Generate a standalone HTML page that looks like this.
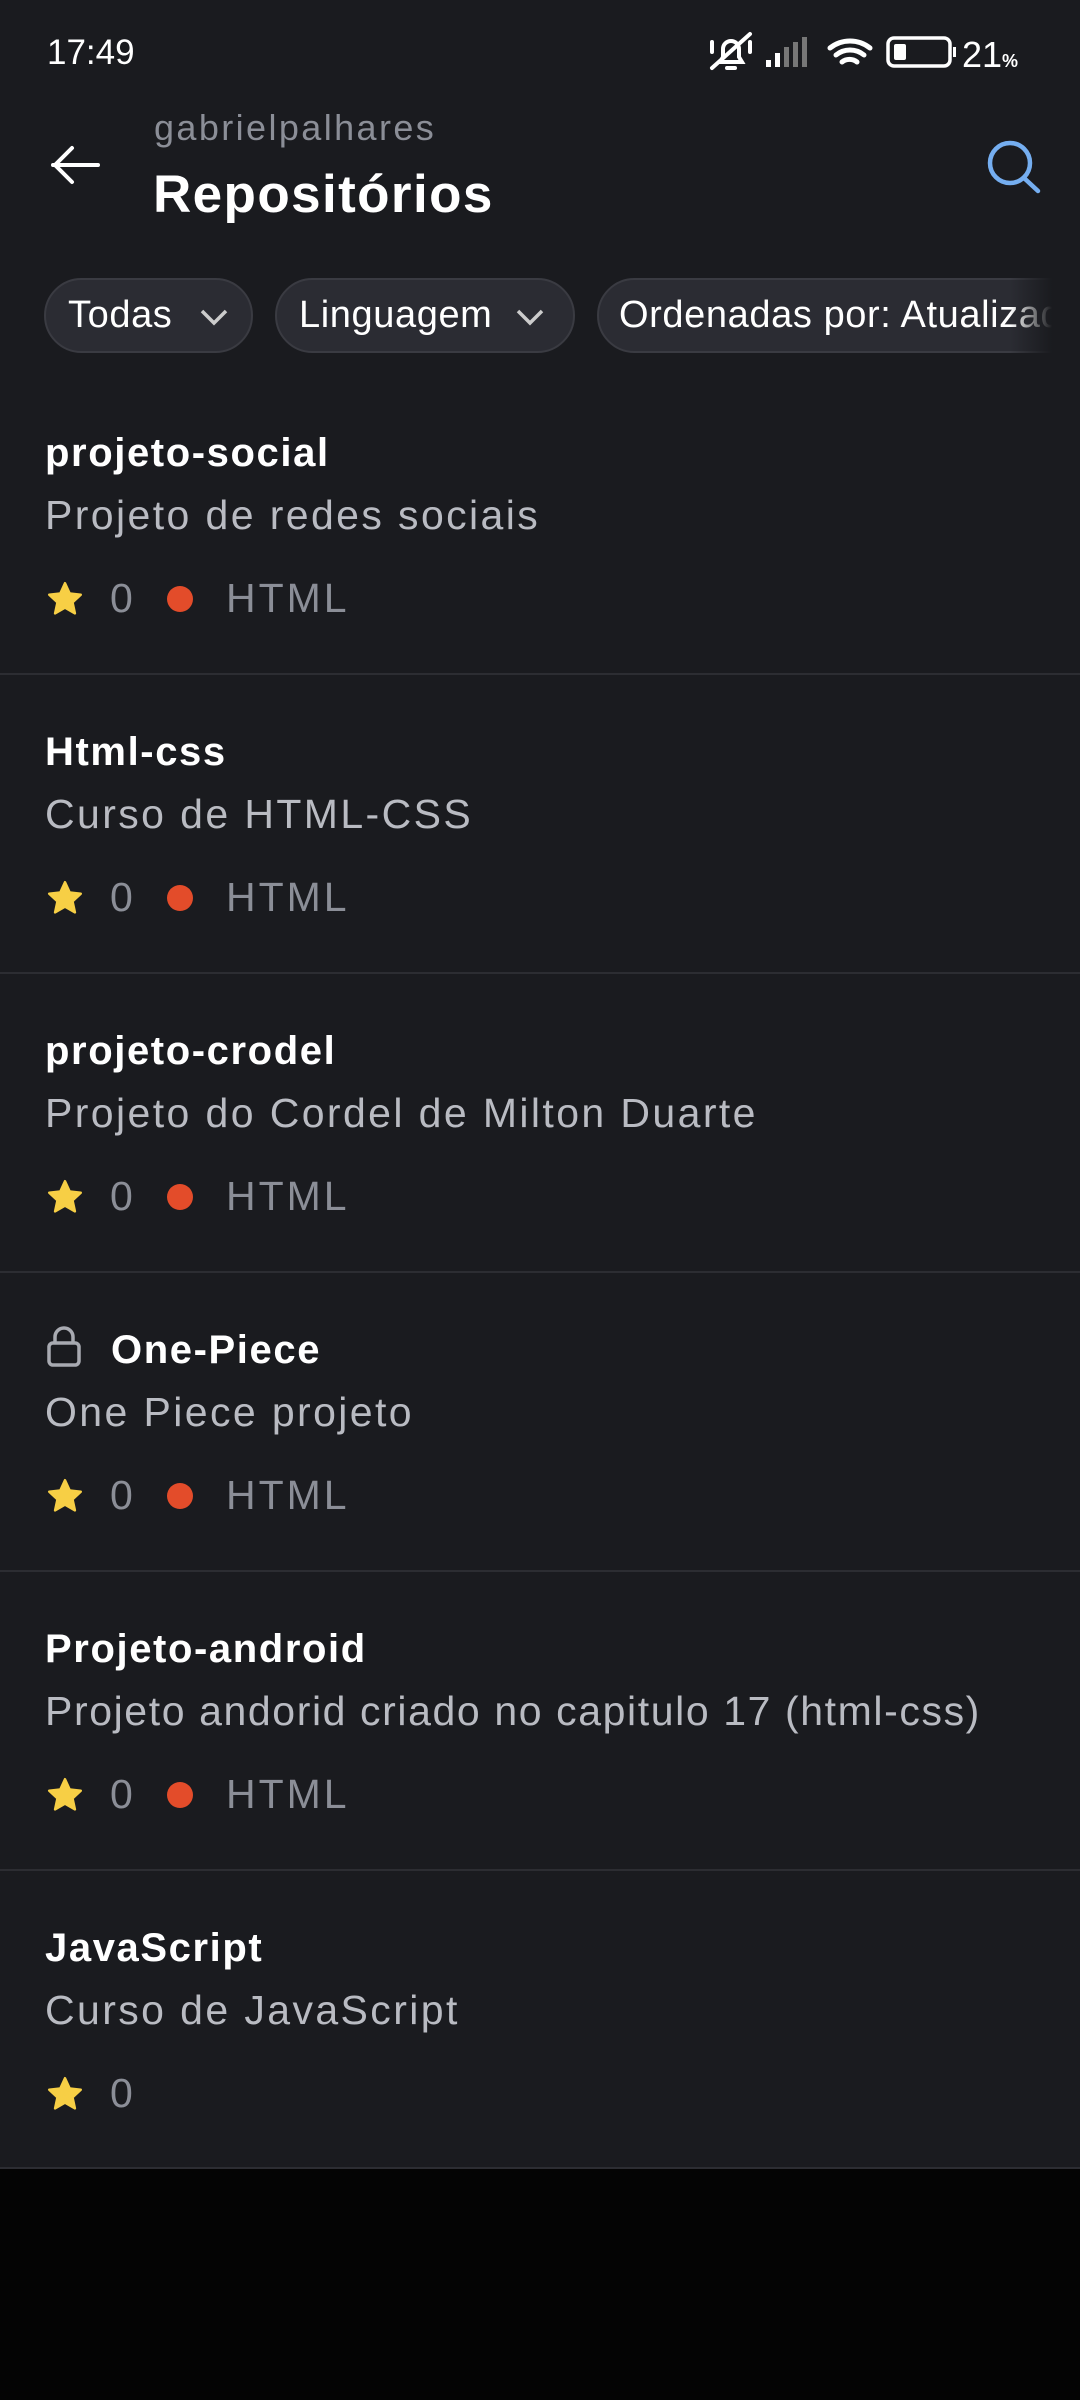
<!DOCTYPE html>
<html><head><meta charset="utf-8"><style>
*{margin:0;padding:0;box-sizing:border-box}
body{width:1080px;height:2400px;background:#040404;font-family:"Liberation Sans",sans-serif;position:relative;overflow:hidden}
.app{position:absolute;left:0;top:0;width:1080px;height:2168px;background:#1a1b1f}
.abs{position:absolute;white-space:nowrap}
.chip{position:absolute;top:278px;height:75px;border-radius:38px;background:#2b2c33;border:2px solid #3a3b42;color:#fff;font-size:38px;line-height:71px;padding-left:22px;letter-spacing:0.6px}
.sep{position:absolute;left:0;width:1080px;height:2px;background:#2c2d32}
.t{font-size:40px;font-weight:bold;color:#fff;line-height:48px;letter-spacing:1.6px}
.d{font-size:41px;color:#b9bbc2;line-height:48px;letter-spacing:2.4px}
.m{font-size:41px;color:#8b8e97;line-height:48px;letter-spacing:3px}
.meta{position:absolute;left:45px;height:48px}
</style></head><body>
<div class="app">
<div class="abs" style="left:47px;top:30px;font-size:35px;color:#fff;line-height:46px">17:49</div>
<svg class="abs" style="left:700px;top:30px" width="330" height="50" viewBox="700 30 330 50">
<g stroke="#fff" stroke-width="4" fill="none" stroke-linecap="round">
<path d="M712 42v10M750 42v10M720 62h22l-3-5v-8a8 8 0 0 0-16 0v8z"/><path d="M712 68l38-34"/><path d="M727 68h8"/>
</g>
<rect x="766" y="60" width="5" height="7" fill="#fff"/><rect x="775" y="53" width="5" height="14" fill="#fff"/>
<rect x="784" y="47" width="5" height="20" fill="#777"/><rect x="793" y="42" width="5" height="25" fill="#777"/><rect x="802" y="37" width="5" height="30" fill="#777"/>
<g stroke="#fff" stroke-width="5" fill="none" stroke-linecap="round"><path d="M830 48a32 32 0 0 1 40 0M836 55a22 22 0 0 1 28 0M842 62a12 12 0 0 1 15 0"/></g>
<rect x="888" y="38" width="62" height="28" rx="6" stroke="#fff" stroke-width="3.5" fill="none"/>
<rect x="894" y="44" width="12" height="16" rx="2" fill="#fff"/><rect x="953" y="47" width="3" height="10" fill="#fff"/>
<text x="962" y="67" font-size="36" fill="#fff" font-family="Liberation Sans">21</text>
<text x="1002" y="67" font-size="18" fill="#fff" font-family="Liberation Sans" font-weight="bold">%</text>
</svg>
<svg class="abs" style="left:50px;top:145px" width="55" height="40" viewBox="0 0 55 40"><path d="M3 20h45M22 3L5 20l17 17" stroke="#fff" stroke-width="4" fill="none" stroke-linecap="round"/></svg>
<div class="abs" style="left:154px;top:106px;font-size:36px;color:#8b8e97;line-height:44px;letter-spacing:2.4px">gabrielpalhares</div>
<div class="abs" style="left:153px;top:163px;font-size:53px;font-weight:bold;color:#fff;line-height:64px;letter-spacing:1.4px">Repositórios</div>
<svg class="abs" style="left:980px;top:135px" width="65" height="65" viewBox="980 135 65 65"><circle cx="1010" cy="163" r="20" stroke="#75aef0" stroke-width="4.5" fill="none"/><path d="M1024 178l14 13" stroke="#75aef0" stroke-width="4.5" stroke-linecap="round"/></svg>
<div class="chip" style="left:44px;width:209px">Todas<svg style="position:absolute;left:153px;top:27px" width="30" height="20"><path d="M3 4l12 12 12-12" stroke="#ccc" stroke-width="3.5" fill="none"/></svg></div>
<div class="chip" style="left:275px;width:300px">Linguagem<svg style="position:absolute;left:238px;top:27px" width="30" height="20"><path d="M3 4l12 12 12-12" stroke="#ccc" stroke-width="3.5" fill="none"/></svg></div>
<div class="chip" style="left:597px;width:520px;overflow:hidden;padding-left:20px">Ordenadas por: Atualizada</div>
<div class="abs" style="left:1010px;top:270px;width:70px;height:90px;background:linear-gradient(to right,rgba(26,27,31,0),#1a1b1f 60%)"></div>

<div class="abs t" style="left:45px;top:429px">projeto-social</div>
<div class="abs d" style="left:45px;top:491px">Projeto de redes sociais</div>
<div class="sep" style="top:673px"></div>

<div class="abs t" style="left:45px;top:728px">Html-css</div>
<div class="abs d" style="left:45px;top:790px">Curso de HTML-CSS</div>
<div class="sep" style="top:972px"></div>

<div class="abs t" style="left:45px;top:1027px">projeto-crodel</div>
<div class="abs d" style="left:45px;top:1089px">Projeto do Cordel de Milton Duarte</div>
<div class="sep" style="top:1271px"></div>

<svg class="abs" style="left:46px;top:1326px" width="36" height="42" viewBox="0 0 36 42"><rect x="3" y="17" width="30" height="22" rx="4" stroke="#a8aab1" stroke-width="3.5" fill="none"/><path d="M9 17v-6a9 9 0 0 1 18 0v6" stroke="#a8aab1" stroke-width="3.5" fill="none"/></svg>
<div class="abs t" style="left:111px;top:1326px">One-Piece</div>
<div class="abs d" style="left:45px;top:1388px">One Piece projeto</div>
<div class="sep" style="top:1570px"></div>

<div class="abs t" style="left:45px;top:1625px">Projeto-android</div>
<div class="abs d" style="left:45px;top:1687px;letter-spacing:1.6px">Projeto andorid criado no capitulo 17 (html-css)</div>
<div class="sep" style="top:1869px"></div>

<div class="abs t" style="left:45px;top:1924px">JavaScript</div>
<div class="abs d" style="left:45px;top:1986px">Curso de JavaScript</div>
<div class="sep" style="top:2167px"></div>
</div>

<div class="meta" style="top:574px"><svg style="position:absolute;left:0;top:6px" width="40" height="38" viewBox="0 0 24 24"><path d="M12 2l3 6.5 7 .8-5.2 4.8 1.5 7L12 17.5 5.7 21.1l1.5-7L2 9.3l7-.8z" fill="#f7cf45" stroke="#f7cf45" stroke-width="1.5" stroke-linejoin="round"/></svg><span class="abs m" style="left:65px;top:0">0</span><span class="abs" style="left:122px;top:12px;width:26px;height:26px;border-radius:50%;background:#e34c2a"></span><span class="abs m" style="left:181px;top:0">HTML</span></div>
<div class="meta" style="top:873px"><svg style="position:absolute;left:0;top:6px" width="40" height="38" viewBox="0 0 24 24"><path d="M12 2l3 6.5 7 .8-5.2 4.8 1.5 7L12 17.5 5.7 21.1l1.5-7L2 9.3l7-.8z" fill="#f7cf45" stroke="#f7cf45" stroke-width="1.5" stroke-linejoin="round"/></svg><span class="abs m" style="left:65px;top:0">0</span><span class="abs" style="left:122px;top:12px;width:26px;height:26px;border-radius:50%;background:#e34c2a"></span><span class="abs m" style="left:181px;top:0">HTML</span></div>
<div class="meta" style="top:1172px"><svg style="position:absolute;left:0;top:6px" width="40" height="38" viewBox="0 0 24 24"><path d="M12 2l3 6.5 7 .8-5.2 4.8 1.5 7L12 17.5 5.7 21.1l1.5-7L2 9.3l7-.8z" fill="#f7cf45" stroke="#f7cf45" stroke-width="1.5" stroke-linejoin="round"/></svg><span class="abs m" style="left:65px;top:0">0</span><span class="abs" style="left:122px;top:12px;width:26px;height:26px;border-radius:50%;background:#e34c2a"></span><span class="abs m" style="left:181px;top:0">HTML</span></div>
<div class="meta" style="top:1471px"><svg style="position:absolute;left:0;top:6px" width="40" height="38" viewBox="0 0 24 24"><path d="M12 2l3 6.5 7 .8-5.2 4.8 1.5 7L12 17.5 5.7 21.1l1.5-7L2 9.3l7-.8z" fill="#f7cf45" stroke="#f7cf45" stroke-width="1.5" stroke-linejoin="round"/></svg><span class="abs m" style="left:65px;top:0">0</span><span class="abs" style="left:122px;top:12px;width:26px;height:26px;border-radius:50%;background:#e34c2a"></span><span class="abs m" style="left:181px;top:0">HTML</span></div>
<div class="meta" style="top:1770px"><svg style="position:absolute;left:0;top:6px" width="40" height="38" viewBox="0 0 24 24"><path d="M12 2l3 6.5 7 .8-5.2 4.8 1.5 7L12 17.5 5.7 21.1l1.5-7L2 9.3l7-.8z" fill="#f7cf45" stroke="#f7cf45" stroke-width="1.5" stroke-linejoin="round"/></svg><span class="abs m" style="left:65px;top:0">0</span><span class="abs" style="left:122px;top:12px;width:26px;height:26px;border-radius:50%;background:#e34c2a"></span><span class="abs m" style="left:181px;top:0">HTML</span></div>
<div class="meta" style="top:2069px"><svg style="position:absolute;left:0;top:6px" width="40" height="38" viewBox="0 0 24 24"><path d="M12 2l3 6.5 7 .8-5.2 4.8 1.5 7L12 17.5 5.7 21.1l1.5-7L2 9.3l7-.8z" fill="#f7cf45" stroke="#f7cf45" stroke-width="1.5" stroke-linejoin="round"/></svg><span class="abs m" style="left:65px;top:0">0</span></div>
</body></html>
